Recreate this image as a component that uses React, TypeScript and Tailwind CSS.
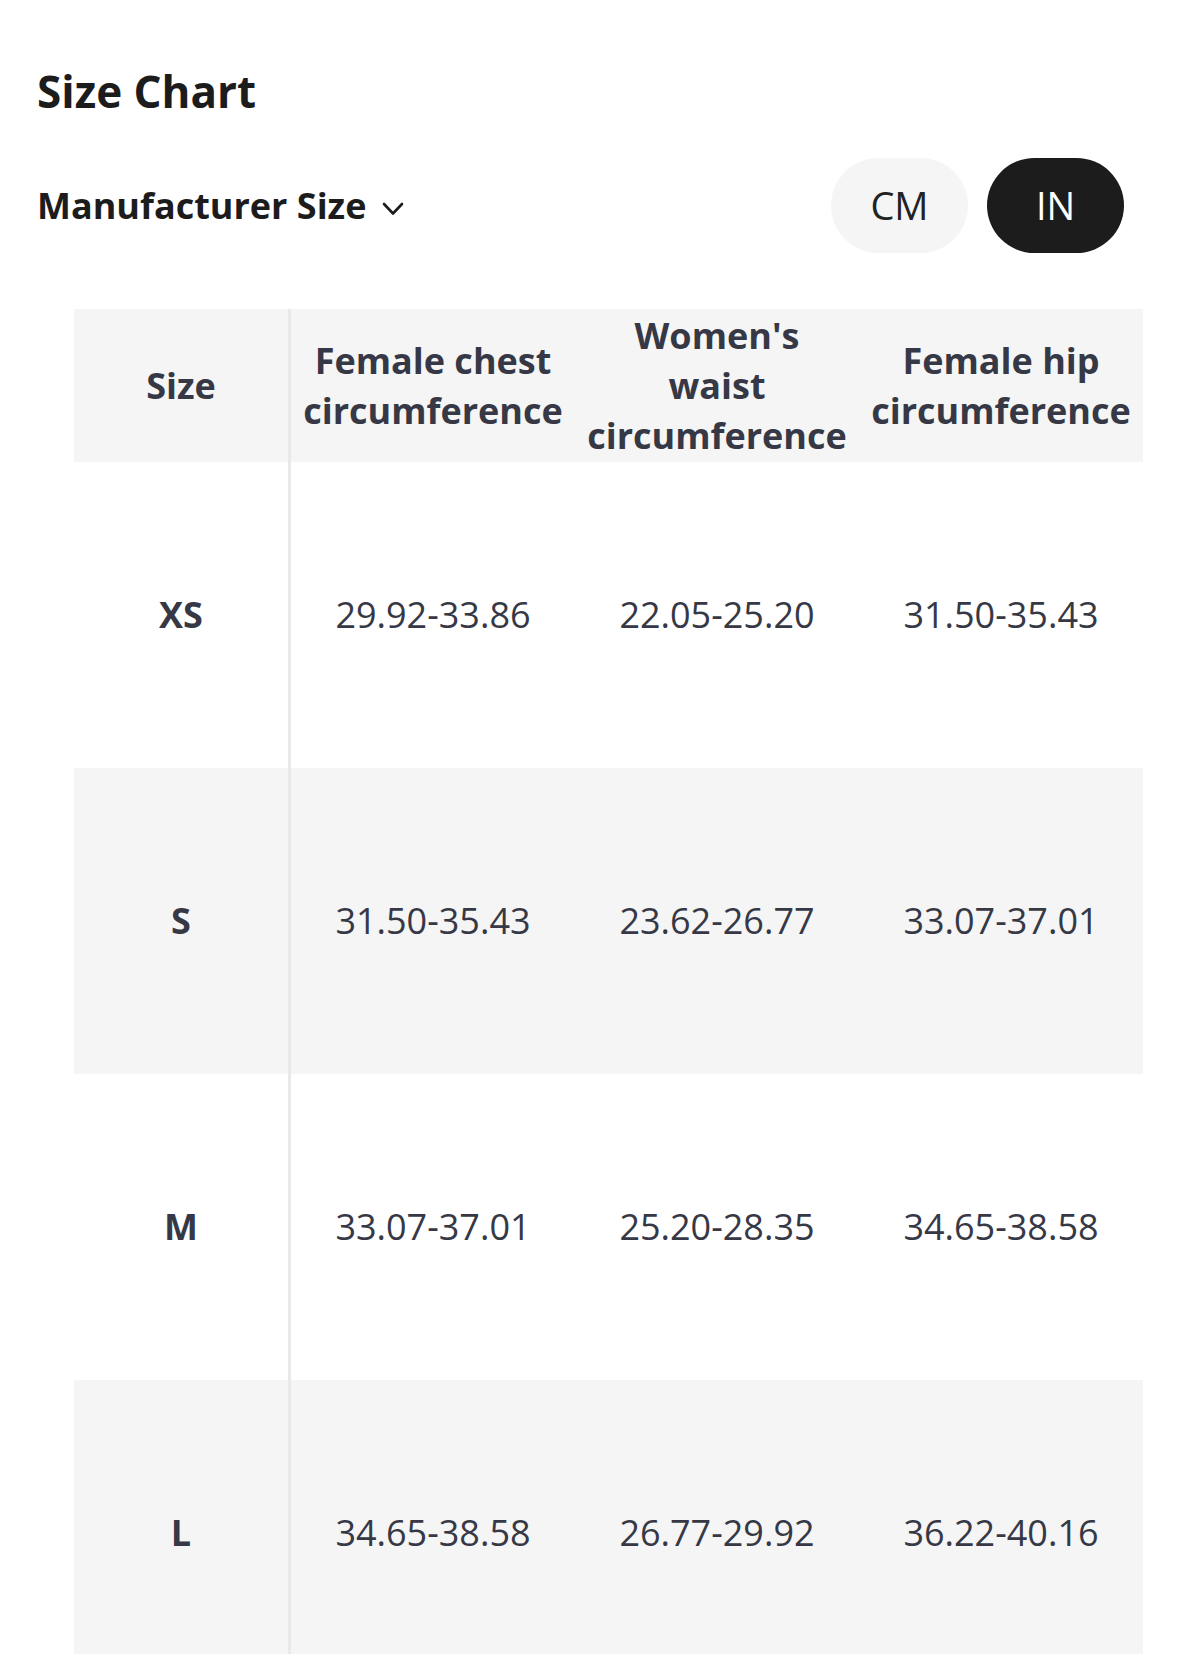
const rows = [
  { size: "XS", chest: "29.92-33.86", waist: "22.05-25.20", hip: "31.50-35.43" },
  { size: "S", chest: "31.50-35.43", waist: "23.62-26.77", hip: "33.07-37.01" },
  { size: "M", chest: "33.07-37.01", waist: "25.20-28.35", hip: "34.65-38.58" },
  { size: "L", chest: "34.65-38.58", waist: "26.77-29.92", hip: "36.22-40.16" },
];

const App = () => {
  return (
    <div
      className="h-[1654px] overflow-hidden bg-white"
      style={{ fontFamily: '"Open Sans", "Noto Sans", sans-serif' }}
    >
      <div className="pl-[37px] pr-[55px] pt-[69px]">
        <h1 className="text-[44px] font-bold leading-none text-[#1c1c1c]">Size Chart</h1>

        <div className="mt-[45px] flex h-[95px] items-center justify-between">
          <button className="flex items-center gap-[16px] text-[36px] font-bold text-[#1c1c1c]">
            Manufacturer Size
            <svg width="22" height="14" viewBox="0 0 22 14" fill="none" className="mt-[6px]">
              <polyline
                points="2,2 11,11.5 20,2"
                stroke="#1c1c1c"
                strokeWidth="2.6"
                strokeLinecap="round"
                strokeLinejoin="round"
              />
            </svg>
          </button>
          <div className="flex gap-[19px]">
            <button className="flex h-[95px] w-[137px] items-center justify-center rounded-full bg-[#f5f5f5] text-[38px] text-[#222]">
              CM
            </button>
            <button className="flex h-[95px] w-[137px] items-center justify-center rounded-full bg-[#1c1c1c] text-[38px] text-white">
              IN
            </button>
          </div>
        </div>
      </div>

      <div className="mt-[56px] pl-[74px] pr-[36px]">
        <div className="grid grid-cols-[217px_284px_284px_284px] text-[36px] leading-[50px] text-[#363945]">
          <div className="flex h-[153px] items-center justify-center border-r-[3px] border-[#e9e9e9] bg-[#f5f5f5] font-bold">
            Size
          </div>
          <div className="flex h-[153px] items-center justify-center bg-[#f5f5f5] text-center font-bold">
            Female chest
            <br />
            circumference
          </div>
          <div className="flex h-[153px] items-center justify-center bg-[#f5f5f5] text-center font-bold">
            Women's
            <br />
            waist
            <br />
            circumference
          </div>
          <div className="flex h-[153px] items-center justify-center bg-[#f5f5f5] text-center font-bold">
            Female hip
            <br />
            circumference
          </div>

          {rows.map((row, i) => {
            const bg = i % 2 === 1 ? "bg-[#f5f5f5]" : "bg-white";
            return (
              <div key={row.size} className="contents">
                <div
                  className={`flex h-[306px] items-center justify-center border-r-[3px] border-[#e9e9e9] font-bold ${bg}`}
                >
                  {row.size}
                </div>
                <div className={`flex h-[306px] items-center justify-center ${bg}`}>{row.chest}</div>
                <div className={`flex h-[306px] items-center justify-center ${bg}`}>{row.waist}</div>
                <div className={`flex h-[306px] items-center justify-center ${bg}`}>{row.hip}</div>
              </div>
            );
          })}
        </div>
      </div>
    </div>
  );
};

export default App;
